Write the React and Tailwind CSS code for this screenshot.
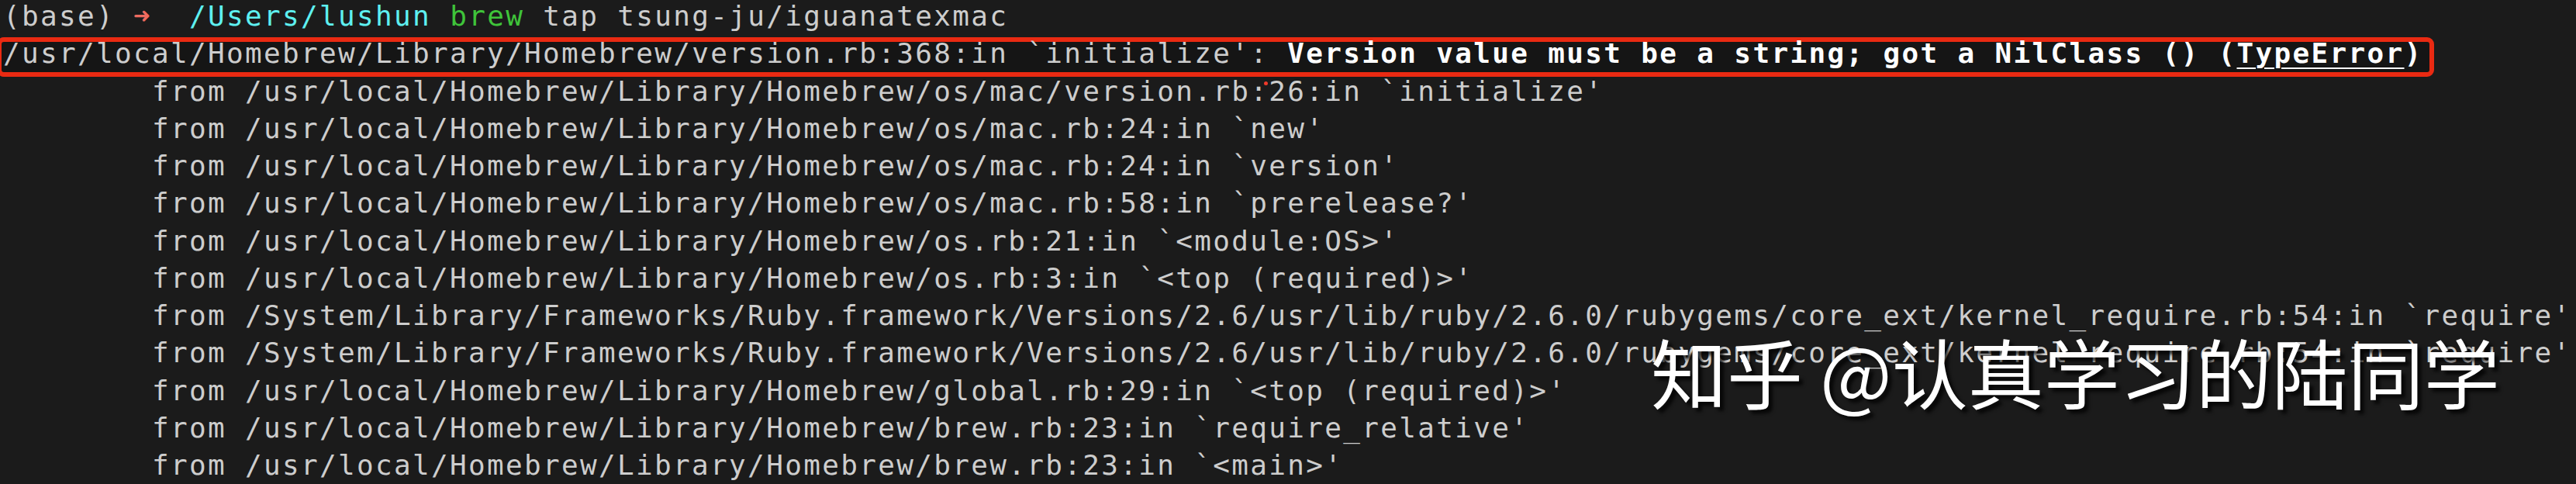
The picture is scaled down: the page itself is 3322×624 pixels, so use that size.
import React from 'react';

const traceLines = [
  "from /usr/local/Homebrew/Library/Homebrew/os/mac/version.rb:26:in `initialize'",
  "from /usr/local/Homebrew/Library/Homebrew/os/mac.rb:24:in `new'",
  "from /usr/local/Homebrew/Library/Homebrew/os/mac.rb:24:in `version'",
  "from /usr/local/Homebrew/Library/Homebrew/os/mac.rb:58:in `prerelease?'",
  "from /usr/local/Homebrew/Library/Homebrew/os.rb:21:in `<module:OS>'",
  "from /usr/local/Homebrew/Library/Homebrew/os.rb:3:in `<top (required)>'",
  "from /System/Library/Frameworks/Ruby.framework/Versions/2.6/usr/lib/ruby/2.6.0/rubygems/core_ext/kernel_require.rb:54:in `require'",
  "from /System/Library/Frameworks/Ruby.framework/Versions/2.6/usr/lib/ruby/2.6.0/rubygems/core_ext/kernel_require.rb:54:in `require'",
  "from /usr/local/Homebrew/Library/Homebrew/global.rb:29:in `<top (required)>'",
  "from /usr/local/Homebrew/Library/Homebrew/brew.rb:23:in `require_relative'",
  "from /usr/local/Homebrew/Library/Homebrew/brew.rb:23:in `<main>'",
];

const Line = ({ children, className = '' }) => (
  <div className={`h-[48.25px] leading-[48.25px] whitespace-pre ${className}`}>{children}</div>
);

export default function App() {
  return (
    <div className="relative w-[3322px] h-[624px] overflow-hidden bg-[#1b1b1b] text-[#cdcdcd] font-['DejaVu_Sans_Mono',monospace] text-[36px] tracking-[2.33px]">
      <div className="-mt-[3px] pl-[4px]">
        {/* prompt */}
        <Line>
          (base) <span className="text-[#ef6b5f] font-bold">➜</span>  <span className="text-[#5ef0f0]">/Users/lushun</span>{' '}
          <span className="text-[#3fc43a]">brew</span> tap tsung-ju/iguanatexmac
        </Line>

        {/* error line with red annotation box */}
        <Line>
          <span className="relative inline-block">
            <span className="absolute top-[3px] -bottom-[5px] -left-[8px] -right-[14px] rounded-[9px] border-[6px] border-[#ea2a12] bg-[#151515]" />
            <span className="relative">
              /usr/local/Homebrew/Library/Homebrew/version.rb:368:in `initialize':{' '}
              <span className="font-bold text-white">
                Version value must be a string; got a NilClass () (<span className="underline decoration-[2px] underline-offset-[6px]">TypeError</span>)
              </span>
            </span>
          </span>
        </Line>

        {traceLines.map((t, i) => (
          <Line key={i} className="pl-[192px]">
            {t}
          </Line>
        ))}
      </div>

      {/* stray cursor dot */}
      <span className="absolute left-[1630px] top-[105px] w-[5px] h-[5px] rounded-full bg-[#f03a2a]" />

      {/* watermark */}
      <div className="absolute left-[2129px] top-[428px] whitespace-pre text-white text-[98px] leading-none tracking-normal font-normal font-['Noto_Sans_CJK_SC',sans-serif] [text-shadow:5px_5px_4px_rgba(0,0,0,0.75)]">
        知乎 @认真学习的陆同学
      </div>
    </div>
  );
}
